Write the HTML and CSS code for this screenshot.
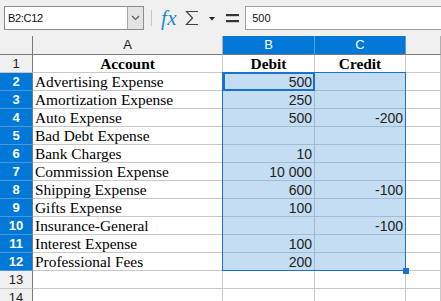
FILE: index.html
```html
<!DOCTYPE html>
<html lang="en">
<head>
    <meta charset="UTF-8">
    <title>Trial Balance - Sheet</title>
    <link rel="stylesheet" href="styles.css">
</head>
<body>
    <div class="toolbar">
        <div class="name-box">
            <span class="name-text">B2:C12</span>
            <span class="name-btn">
                <svg width="9" height="6" viewBox="0 0 9 6"><polyline points="1,1 4.5,4.5 8,1" fill="none" stroke="#555" stroke-width="1.1"/></svg>
            </span>
        </div>
        <div class="tb-sep"></div>
        <span class="fx">fx</span>
        <svg class="sigma" width="14" height="16" viewBox="0 0 14 16"><polyline points="13,1.5 1.5,1.5 7.5,8 1.5,14.5 13,14.5" fill="none" stroke="#444" stroke-width="1.2"/></svg>
        <svg class="caret" width="6" height="4" viewBox="0 0 6 4"><polygon points="0,0 6,0 3,3.5" fill="#222"/></svg>
        <svg class="equals" width="13" height="9" viewBox="0 0 13 9"><rect x="0" y="0" width="13" height="2.2" fill="#333"/><rect x="0" y="6" width="13" height="2.2" fill="#333"/></svg>
        <div class="formula-input">500</div>
    </div>

    <div class="sheet">
        <div class="grid">
            <div class="hd corner"></div>
            <div class="hd col">A</div>
            <div class="hd col sel">B</div>
            <div class="hd col sel">C</div>
            <div class="hd col"></div>

            <div class="rh">1</div>
            <div class="c serif bold center">Account</div>
            <div class="c serif bold center">Debit</div>
            <div class="c serif bold center">Credit</div>
            <div class="c"></div>

            <div class="rh sel">2</div>
            <div class="c serif">Advertising Expense</div>
            <div class="c num in cursor">500</div>
            <div class="c num in"></div>
            <div class="c"></div>

            <div class="rh sel">3</div>
            <div class="c serif">Amortization Expense</div>
            <div class="c num in">250</div>
            <div class="c num in"></div>
            <div class="c"></div>

            <div class="rh sel">4</div>
            <div class="c serif">Auto Expense</div>
            <div class="c num in">500</div>
            <div class="c num in">-200</div>
            <div class="c"></div>

            <div class="rh sel">5</div>
            <div class="c serif">Bad Debt Expense</div>
            <div class="c num in"></div>
            <div class="c num in"></div>
            <div class="c"></div>

            <div class="rh sel">6</div>
            <div class="c serif">Bank Charges</div>
            <div class="c num in">10</div>
            <div class="c num in"></div>
            <div class="c"></div>

            <div class="rh sel">7</div>
            <div class="c serif">Commission Expense</div>
            <div class="c num in">10 000</div>
            <div class="c num in"></div>
            <div class="c"></div>

            <div class="rh sel">8</div>
            <div class="c serif">Shipping Expense</div>
            <div class="c num in">600</div>
            <div class="c num in">-100</div>
            <div class="c"></div>

            <div class="rh sel">9</div>
            <div class="c serif">Gifts Expense</div>
            <div class="c num in">100</div>
            <div class="c num in"></div>
            <div class="c"></div>

            <div class="rh sel">10</div>
            <div class="c serif">Insurance-General</div>
            <div class="c num in"></div>
            <div class="c num in">-100</div>
            <div class="c"></div>

            <div class="rh sel">11</div>
            <div class="c serif">Interest Expense</div>
            <div class="c num in">100</div>
            <div class="c num in"></div>
            <div class="c"></div>

            <div class="rh sel">12</div>
            <div class="c serif">Professional Fees</div>
            <div class="c num in">200</div>
            <div class="c num in"></div>
            <div class="c"></div>

            <div class="rh">13</div>
            <div class="c"></div>
            <div class="c"></div>
            <div class="c"></div>
            <div class="c"></div>

            <div class="rh">14</div>
            <div class="c"></div>
            <div class="c"></div>
            <div class="c"></div>
            <div class="c"></div>
        </div>
        <div class="selection"></div>
    </div>
</body>
</html>
```

FILE: styles.css
```css
body { margin: 0; background: #f0f0f0; font-family: "Liberation Sans", Arial, sans-serif; overflow: hidden; }

/* formula bar */
.toolbar { height: 36px; display: flex; align-items: center; padding-left: 4px; box-sizing: border-box; }
.name-box { width: 140px; height: 24px; box-sizing: border-box; border: 1px solid #8c8c8c; background: #fff; display: flex; }
.name-text { flex: 1; font-size: 11px; line-height: 22px; padding-left: 3px; color: #111; letter-spacing: -0.3px; }
.name-btn { width: 15px; background: #e3e3e3; border-left: 1px solid #a8a8a8; display: flex; align-items: center; justify-content: center; }
.tb-sep { width: 1px; height: 16px; background: #c8c8c8; margin: 0 9px 0 7px; }
.fx { font-family: "Liberation Serif", serif; font-style: italic; font-size: 21px; color: #1f87cf; line-height: 20px; margin-right: 8px; letter-spacing: 0.5px; }
.sigma { margin-right: 10px; }
.caret { margin-right: 11px; margin-top: 2px; }
.equals { margin-right: 6px; }
.formula-input { flex: 1; height: 24px; box-sizing: border-box; border: 1px solid #a0a0a0; border-right: none; background: #fff; font-size: 11px; line-height: 22px; padding-left: 6px; color: #111; }

/* sheet grid */
.sheet { position: relative; background: #fff; }
.grid { display: grid; grid-template-columns: 33px 190px 92px 91px 1fr; grid-template-rows: 19px repeat(14, 18px); }
.grid > div { box-sizing: border-box; border-right: 1px solid #c8c8c8; border-bottom: 1px solid #c8c8c8; overflow: hidden; white-space: nowrap; }

.hd { background: #f0f0f0; border-bottom-color: #7a7a7a !important; font-size: 13px; color: #222; text-align: center; line-height: 18px; }
.hd.col { border-right-color: #b0b0b0; }
.corner { border-right-color: #7a7a7a !important; }
.hd.sel { background: #0078d7; color: #fff; border-right-color: #5c9edb; }

.rh { background: #f0f0f0; border-right-color: #7a7a7a !important; border-bottom-color: #c0c0c0; font-size: 13px; color: #222; text-align: center; line-height: 17px; }
.rh.sel { background: #0078d7; color: #fff; font-weight: bold; border-bottom-color: #4b98dc; }

.c { line-height: 18px; color: #111; padding: 0 2px; }
.serif { font-family: "Liberation Serif", "Times New Roman", serif; font-size: 15.4px; color: #000; }
.bold { font-weight: bold; }
.center { text-align: center; }
.num { font-size: 14px; text-align: right; color: #222; }
.in { background: #c4ddf3; border-color: #a0bcd4 !important; }
.grid > .cursor { position: relative; overflow: visible; }
.cursor::after { content: ""; position: absolute; left: 0; top: -1px; right: -1px; bottom: -1px; border: 2px solid #1872cf; }

.selection { position: absolute; left: 222px; top: 36px; width: 184px; height: 199px; box-sizing: border-box; border: 1px solid #1872cf; pointer-events: none; }
.selection::after { content: ""; position: absolute; right: -4px; bottom: -4px; width: 6px; height: 6px; background: #1872cf; }
```
